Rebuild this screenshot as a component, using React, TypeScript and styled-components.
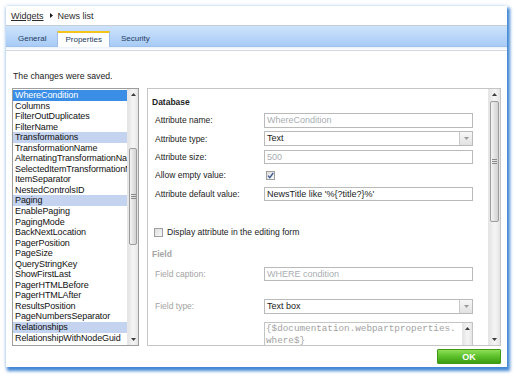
import React from "react";
import styled, { createGlobalStyle } from "styled-components";

const GlobalStyle = createGlobalStyle`
  html, body { margin: 0; padding: 0; background: #ffffff; }
  body { font-family: "Liberation Sans", Arial, sans-serif; }
  * { box-sizing: border-box; }
`;

const Page = styled.div`
  width: 516px;
  height: 377px;
  padding: 6px 0 0 6px;
  overflow: hidden;
`;

const Window = styled.div`
  width: 501px;
  height: 361px;
  background: #ffffff;
  display: flex;
  flex-direction: column;
  box-shadow: 2px 3px 3px 1px rgba(38, 118, 206, 0.85), 0 0 4px rgba(120, 170, 225, 0.45);
`;

const Header = styled.div`
  height: 20px;
  border-bottom: 1px solid #c6ccd3;
  display: flex;
  align-items: center;
  padding-left: 5px;
  font-size: 9px;
  color: #2b2b2b;
`;

const Crumb = styled.a`
  color: #2b2b2b;
  text-decoration: underline;
`;

const CrumbArrow = styled.svg`
  margin: 0 5px 0 6px;
`;

const TabBar = styled.div`
  height: 21px;
  border-bottom: 1px solid #9fc2ec;
  background: linear-gradient(#cde3fc, #a8cbf6);
  display: flex;
  align-items: flex-end;
  gap: 3px;
  padding-left: 4px;
`;

const Tab = styled.div<{ $active?: boolean }>`
  height: ${(p) => (p.$active ? 16 : 15)}px;
  margin-bottom: ${(p) => (p.$active ? -1 : 0)}px;
  padding: 0 7px;
  font-size: 8px;
  line-height: ${(p) => (p.$active ? 13 : 15)}px;
  color: #223c5e;
  background: ${(p) => (p.$active ? "#ffffff" : "transparent")};
  border-top: ${(p) => (p.$active ? "2px solid #f4c41c" : "none")};
  border-left: 1px solid ${(p) => (p.$active ? "#9dbde4" : "transparent")};
  border-right: 1px solid ${(p) => (p.$active ? "#9dbde4" : "transparent")};
  position: relative;
`;

const Strip = styled.div`
  height: 4px;
  border-bottom: 1px solid #d3d9e0;
  background: linear-gradient(#eaf2fc, #ffffff);
`;

const Content = styled.div`
  padding: 0 6px;
  display: flex;
  flex-direction: column;
`;

const Message = styled.div`
  margin-top: 19px;
  padding-left: 1px;
  line-height: 12px;
  font-size: 8.7px;
  color: #222222;
`;

const Main = styled.div`
  margin-top: 6px;
  height: 258px;
  display: flex;
  gap: 8px;
`;

const ListBox = styled.div`
  width: 127px;
  height: 100%;
  border: 1px solid #9d9d9d;
  display: flex;
`;

const Items = styled.ul`
  flex: 1;
  margin: 0;
  padding: 1px 0 0;
  list-style: none;
  overflow: hidden;
`;

type ItemKind = "normal" | "selected" | "group";

const Item = styled.li<{ $kind: ItemKind }>`
  height: 10.55px;
  line-height: 10.55px;
  font-size: 9px;
  letter-spacing: -0.1px;
  padding-left: 2px;
  white-space: nowrap;
  overflow: hidden;
  color: ${(p) => (p.$kind === "selected" ? "#ffffff" : "#111111")};
  background: ${(p) =>
    p.$kind === "selected" ? "#3b8ee6" : p.$kind === "group" ? "#c4d3ef" : "transparent"};
`;

const VScroll = styled.div<{ $w: number }>`
  width: ${(p) => p.$w}px;
  flex: none;
  display: flex;
  flex-direction: column;
  border-left: 1px solid #e6e6e6;
  background: linear-gradient(to right, #e4e4e4, #f3f3f3 45%, #f3f3f3 60%, #e4e4e4);
`;

const ArrowBtn = styled.div`
  height: 11px;
  flex: none;
  display: flex;
  align-items: center;
  justify-content: center;
`;

const Track = styled.div<{ $offset: number }>`
  flex: 1;
  min-height: 0;
  padding-top: ${(p) => p.$offset}px;
  display: flex;
  flex-direction: column;
  overflow: hidden;
`;

const Thumb = styled.div<{ $h: number }>`
  height: ${(p) => p.$h}px;
  flex: none;
  margin: 0 1px;
  border: 1px solid #9c9c9c;
  border-radius: 2px;
  background: linear-gradient(to right, #f4f4f4, #e2e2e2 50%, #d2d2d2);
  display: flex;
  align-items: center;
  justify-content: center;
`;

const Panel = styled.div`
  width: 354px;
  height: 100%;
  border: 1px solid #c6c6c6;
  display: flex;
`;

const PanelBody = styled.div`
  flex: 1;
  overflow: hidden;
  padding: 7px 0 0 4px;
`;

const SectionTitle = styled.div<{ $muted?: boolean }>`
  font-weight: bold;
  font-size: 8.5px;
  line-height: 12px;
  color: ${(p) => (p.$muted ? "#a5a5a5" : "#1e1e1e")};
`;

const FormGrid = styled.div<{ $gap: number; $top: number }>`
  display: grid;
  grid-template-columns: 109px 209px;
  grid-auto-rows: 14.5px;
  row-gap: ${(p) => p.$gap}px;
  margin: ${(p) => p.$top}px 0 0 3px;
  align-items: center;
`;

const Label = styled.div<{ $muted?: boolean }>`
  font-size: 8.5px;
  color: ${(p) => (p.$muted ? "#a3a3a3" : "#222222")};
  white-space: nowrap;
`;

const Field = styled.div<{ $tone: "muted" | "dark" }>`
  height: 14.5px;
  border: 1px solid #bababa;
  padding-left: 2px;
  font-size: 9px;
  line-height: 12.5px;
  white-space: nowrap;
  overflow: hidden;
  color: ${(p) => (p.$tone === "muted" ? "#a9aeb2" : "#1a1a1a")};
  display: flex;
  background: #ffffff;
`;

const FieldText = styled.span`
  flex: 1;
`;

const DropButton = styled.div`
  width: 13px;
  margin: 0 0 0 auto;
  border-left: 1px solid #c9c9c9;
  background: linear-gradient(#f7f7f7, #e2e2e2);
  display: flex;
  align-items: center;
  justify-content: center;
`;

const Check = styled.div`
  width: 9px;
  height: 9px;
  border: 1px solid #9e9e9e;
  background: linear-gradient(135deg, #dedede, #f8f8f8);
  display: flex;
  align-items: center;
  justify-content: center;
`;

const CheckCell = styled.div`
  padding-left: 2px;
  display: flex;
`;

const DisplayRow = styled.div`
  margin: 25px 0 0 2px;
  height: 12px;
  display: flex;
  align-items: center;
  gap: 4px;
  font-size: 8.6px;
  color: #222222;
`;

const FieldTitle = styled(SectionTitle)`
  margin-top: 10px;
`;

const AreaRow = styled.div`
  display: grid;
  grid-template-columns: 109px 209px;
  margin: 8.2px 0 0 3px;
`;

const TextArea = styled.div`
  grid-column: 2;
  height: 42px;
  border: 1px solid #c4c4c4;
  display: flex;
`;

const AreaText = styled.div`
  flex: 1;
  padding-left: 1px;
  font-family: "Liberation Mono", "Courier New", monospace;
  font-size: 9.3px;
  line-height: 12px;
  color: #a2a2a2;
  white-space: pre;
  overflow: hidden;
`;

const Footer = styled.div`
  margin-top: 3px;
  display: flex;
  justify-content: flex-end;
`;

const OkButton = styled.button`
  width: 64px;
  height: 15px;
  padding: 0;
  border: 1px solid #3f9a17;
  border-radius: 1px;
  background: linear-gradient(#8ede57, #5cc02a 50%, #3c9d12);
  color: #ffffff;
  font-family: "Liberation Sans", Arial, sans-serif;
  font-weight: bold;
  font-size: 9px;
  line-height: 12px;
`;

const UpArrow = () => (
  <svg width="5" height="3" viewBox="0 0 5 3">
    <path d="M0 3 L2.5 0 L5 3 Z" fill="#3c3c3c" />
  </svg>
);

const DownArrow = ({ color = "#3c3c3c" }: { color?: string }) => (
  <svg width="5" height="3" viewBox="0 0 5 3">
    <path d="M0 0 L5 0 L2.5 3 Z" fill={color} />
  </svg>
);

const Grip = () => (
  <svg width="5" height="5" viewBox="0 0 5 5">
    <path d="M0 0.5 H5 M0 2.5 H5 M0 4.5 H5" stroke="#8a8a8a" strokeWidth="1" />
  </svg>
);

const ScrollBar = ({
  width,
  offset,
  thumb,
  down = true,
}: {
  width: number;
  offset: number;
  thumb?: number;
  down?: boolean;
}) => (
  <VScroll $w={width}>
    <ArrowBtn>
      <UpArrow />
    </ArrowBtn>
    <Track $offset={offset}>
      {thumb ? (
        <Thumb $h={thumb}>
          <Grip />
        </Thumb>
      ) : null}
    </Track>
    {down ? (
      <ArrowBtn>
        <DownArrow />
      </ArrowBtn>
    ) : null}
  </VScroll>
);

const items: { text: string; kind: ItemKind }[] = [
  { text: "WhereCondition", kind: "selected" },
  { text: "Columns", kind: "normal" },
  { text: "FilterOutDuplicates", kind: "normal" },
  { text: "FilterName", kind: "normal" },
  { text: "Transformations", kind: "group" },
  { text: "TransformationName", kind: "normal" },
  { text: "AlternatingTransformationName", kind: "normal" },
  { text: "SelectedItemTransformationName", kind: "normal" },
  { text: "ItemSeparator", kind: "normal" },
  { text: "NestedControlsID", kind: "normal" },
  { text: "Paging", kind: "group" },
  { text: "EnablePaging", kind: "normal" },
  { text: "PagingMode", kind: "normal" },
  { text: "BackNextLocation", kind: "normal" },
  { text: "PagerPosition", kind: "normal" },
  { text: "PageSize", kind: "normal" },
  { text: "QueryStringKey", kind: "normal" },
  { text: "ShowFirstLast", kind: "normal" },
  { text: "PagerHTMLBefore", kind: "normal" },
  { text: "PagerHTMLAfter", kind: "normal" },
  { text: "ResultsPosition", kind: "normal" },
  { text: "PageNumbersSeparator", kind: "normal" },
  { text: "Relationships", kind: "group" },
  { text: "RelationshipWithNodeGuid", kind: "normal" },
];

const Select = ({ value }: { value: string }) => (
  <Field $tone="dark">
    <FieldText>{value}</FieldText>
    <DropButton>
      <DownArrow color="#9a9a9a" />
    </DropButton>
  </Field>
);

export default function App() {
  return (
    <>
      <GlobalStyle />
      <Page>
        <Window>
          <Header>
            <Crumb>Widgets</Crumb>
            <CrumbArrow width="3" height="5" viewBox="0 0 3 5">
              <path d="M0 0 L3 2.5 L0 5 Z" fill="#1a1a1a" />
            </CrumbArrow>
            <span>News list</span>
          </Header>
          <TabBar>
            <Tab>General</Tab>
            <Tab $active>Properties</Tab>
            <Tab>Security</Tab>
          </TabBar>
          <Strip />
          <Content>
            <Message>The changes were saved.</Message>
            <Main>
              <ListBox>
                <Items>
                  {items.map((it) => (
                    <Item key={it.text} $kind={it.kind}>
                      {it.text}
                    </Item>
                  ))}
                </Items>
                <ScrollBar width={11} offset={48} thumb={97} />
              </ListBox>
              <Panel>
                <PanelBody>
                  <SectionTitle>Database</SectionTitle>
                  <FormGrid $gap={3.9} $top={5}>
                    <Label>Attribute name:</Label>
                    <Field $tone="muted">WhereCondition</Field>
                    <Label>Attribute type:</Label>
                    <Select value="Text" />
                    <Label>Attribute size:</Label>
                    <Field $tone="muted">500</Field>
                    <Label>Allow empty value:</Label>
                    <CheckCell>
                      <Check>
                        <svg width="7" height="7" viewBox="0 0 7 7">
                          <path
                            d="M1 3.6 L2.8 5.6 L6.2 1"
                            stroke="#3d5a8f"
                            strokeWidth="1.3"
                            fill="none"
                          />
                        </svg>
                      </Check>
                    </CheckCell>
                    <Label>Attribute default value:</Label>
                    <Field $tone="dark">NewsTitle like '%{"{"}?title?{"}"}%'</Field>
                  </FormGrid>
                  <DisplayRow>
                    <Check />
                    <span>Display attribute in the editing form</span>
                  </DisplayRow>
                  <FieldTitle $muted>Field</FieldTitle>
                  <FormGrid $gap={17.8} $top={6.7}>
                    <Label $muted>Field caption:</Label>
                    <Field $tone="muted">WHERE condition</Field>
                    <Label $muted>Field type:</Label>
                    <Select value="Text box" />
                  </FormGrid>
                  <AreaRow>
                    <TextArea>
                      <AreaText>
                        {"{$documentation.webpartproperties.\nwhere$}"}
                      </AreaText>
                      <ScrollBar width={10} offset={0} down={false} />
                    </TextArea>
                  </AreaRow>
                </PanelBody>
                <ScrollBar width={12} offset={1} thumb={121} />
              </Panel>
            </Main>
            <Footer>
              <OkButton>OK</OkButton>
            </Footer>
          </Content>
        </Window>
      </Page>
    </>
  );
}
